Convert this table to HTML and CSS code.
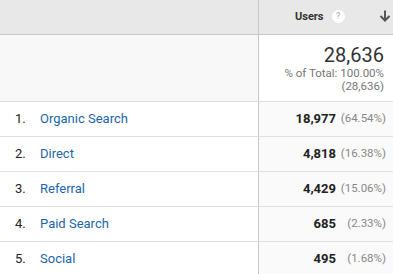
FILE: index.html
```html
<!DOCTYPE html>
<html>
<head>
<meta charset="utf-8">
<link rel="stylesheet" href="styles.css">
</head>
<body>
<div class="report">
  <div class="row head">
    <div class="cell dim"></div>
    <div class="cell metric">
      <span class="metric-name">Users</span>
      <span class="help">?</span>
      <svg class="sort" width="12" height="12" viewBox="0 0 12 12"><path d="M6 0.5v10M1.5 6l4.5 4.5 4.5-4.5" fill="none" stroke="#555" stroke-width="2"/></svg>
    </div>
  </div>
  <div class="row total">
    <div class="cell dim"></div>
    <div class="cell metric">
      <div class="total-value">28,636</div>
      <div class="total-sub">% of Total: 100.00%</div>
      <div class="total-sub">(28,636)</div>
    </div>
  </div>
  <div class="row data">
    <div class="cell dim"><span class="idx">1.</span><span class="name">Organic Search</span></div>
    <div class="cell metric"><span class="num">18,977</span><span class="pct">(64.54%)</span></div>
  </div>
  <div class="row data">
    <div class="cell dim"><span class="idx">2.</span><span class="name">Direct</span></div>
    <div class="cell metric"><span class="num">4,818</span><span class="pct">(16.38%)</span></div>
  </div>
  <div class="row data">
    <div class="cell dim"><span class="idx">3.</span><span class="name">Referral</span></div>
    <div class="cell metric"><span class="num">4,429</span><span class="pct">(15.06%)</span></div>
  </div>
  <div class="row data">
    <div class="cell dim"><span class="idx">4.</span><span class="name">Paid Search</span></div>
    <div class="cell metric"><span class="num">685</span><span class="pct">(2.33%)</span></div>
  </div>
  <div class="row data">
    <div class="cell dim"><span class="idx">5.</span><span class="name">Social</span></div>
    <div class="cell metric"><span class="num">495</span><span class="pct">(1.68%)</span></div>
  </div>
</div>
</body>
</html>
```
FILE: styles.css
```css
* { box-sizing: border-box; }
html, body { margin: 0; padding: 0; background: #fff; }
body { font-family: Roboto, "Liberation Sans", sans-serif; color: #222; }
.report { width: 393px; }
.row { display: grid; grid-template-columns: 259px 134px; }
.cell.dim { border-right: 1px solid #c8c8c8; }
.head { height: 35px; background: #e8e8e8; border-bottom: 1px solid #c8c8c8; }
.head .metric { display: flex; align-items: center; padding-left: 36px; padding-right: 2px; padding-bottom: 2px; }
.metric-name { font-size: 11px; font-weight: 700; color: #333; }
.help { width: 13px; height: 13px; border-radius: 50%; background: #fff; color: #aaa; font-size: 9px; line-height: 13px; text-align: center; margin-left: 8px; }
.sort { margin-left: auto; margin-bottom: 1px; }
.total { height: 67px; border-bottom: 1px solid #dedede; }
.total .dim { background: #f8f8f8; }
.total .metric { text-align: right; padding: 8px 9px 0 0; }
.total-value { font-size: 20px; color: #333; line-height: 24px; }
.total-sub { font-size: 11.5px; color: #777; line-height: 13px; }
.data { height: 35px; border-bottom: 1px solid #e0e0e0; font-size: 13px; }
.data .dim { display: flex; align-items: center; padding-left: 15px; padding-bottom: 2px; }
.idx { width: 25px; color: #222; }
.name { color: #2166ad; }
.data .metric { background: #fafafa; display: flex; align-items: center; justify-content: flex-end; padding-right: 7px; padding-bottom: 2px; }
.num { font-weight: 700; color: #222; }
.pct { width: 50px; text-align: right; font-size: 11.5px; color: #888; }
```
